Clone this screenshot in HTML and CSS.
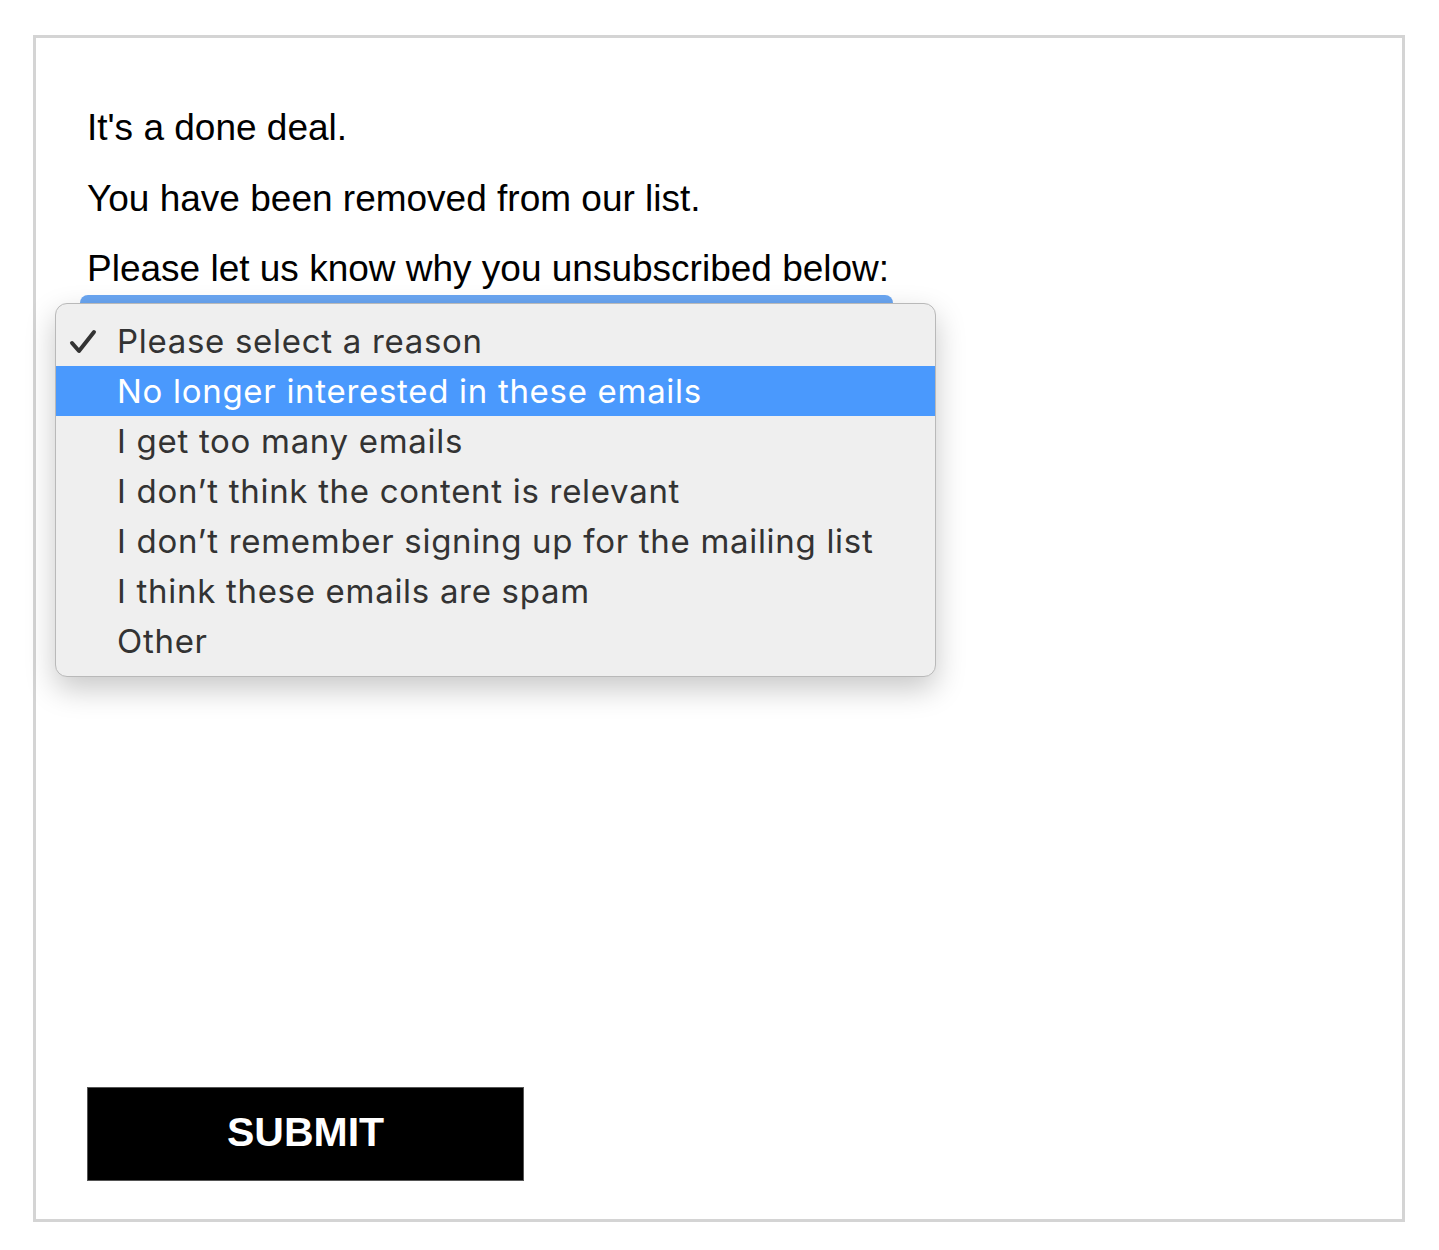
FILE: index.html
```html
<!DOCTYPE html>
<html lang="en">
<head>
  <meta charset="UTF-8">
  <meta name="viewport" content="width=device-width, initial-scale=1.0">
  <title>Unsubscribed</title>
  <link rel="stylesheet" href="styles.css">
</head>
<body>
  <div class="frame">
    <p class="msg">It's a done deal.</p>
    <p class="msg">You have been removed from our list.</p>
    <p class="msg last">Please let us know why you unsubscribed below:</p>

    <div class="select-wrap">
      <div class="select"></div>
      <!-- native popup menu, open -->
      <ul class="menu">
        <li class="item checked">
          <svg class="check" width="28" height="28" viewBox="0 0 28 28">
            <path d="M3 15 L10 23 L25 4" fill="none" stroke="#333" stroke-width="4" stroke-linecap="round" stroke-linejoin="round"/>
          </svg>
          Please select a reason
        </li>
        <li class="item active">No longer interested in these emails</li>
        <li class="item">I get too many emails</li>
        <li class="item">I don’t think the content is relevant</li>
        <li class="item">I don’t remember signing up for the mailing list</li>
        <li class="item">I think these emails are spam</li>
        <li class="item">Other</li>
      </ul>
    </div>

    <button class="submit">SUBMIT</button>
  </div>
</body>
</html>
```

FILE: styles.css
```css
*{
  margin: 0;
  padding: 0;
  box-sizing: border-box;
}
body{
  background: #fff;
  font-family: "Liberation Sans", Arial, sans-serif;
}
.frame{
  width: 1372px;
  height: 1187px;
  margin: 35px 0 0 33px;
  border: 3px solid #d4d4d4;
  padding: 70px 0 0 51px;
}
.msg{
  font-size: 37px;
  line-height: 40px;
  color: #000;
  margin-bottom: 30.5px;
}
.msg.last{
  margin-bottom: 6px;
}
.select-wrap{
  position: relative;
  margin-left: -7px;
  width: 813px;
}
.select{
  height: 50px;
  background: #6aa6f2;
  border-radius: 8px;
}
.menu{
  position: absolute;
  left: -25px;
  top: 8px;
  width: 881px;
  list-style: none;
  background: #efefef;
  border: 1px solid #b9b9b9;
  border-radius: 12px;
  padding: 12px 0 10px;
  box-shadow: 0 12px 30px rgba(0,0,0,0.22);
  font-family: Inter, "Open Sans", sans-serif;
  font-size: 33px;
  letter-spacing: 0.7px;
  color: #333;
}
.item{
  position: relative;
  height: 50px;
  line-height: 50px;
  padding-left: 61px;
}
.item.active{
  background: #4a99fd;
  color: #fff;
}
.check{
  position: absolute;
  left: 13px;
  top: 12px;
}
.submit{
  display: block;
  margin-top: 742px;
  width: 437px;
  height: 94px;
  padding-bottom: 3px;
  background: #000;
  color: #fff;
  border: 1px solid #555;
  font-family: "Liberation Sans", Arial, sans-serif;
  font-weight: bold;
  font-size: 41px;
}
```
